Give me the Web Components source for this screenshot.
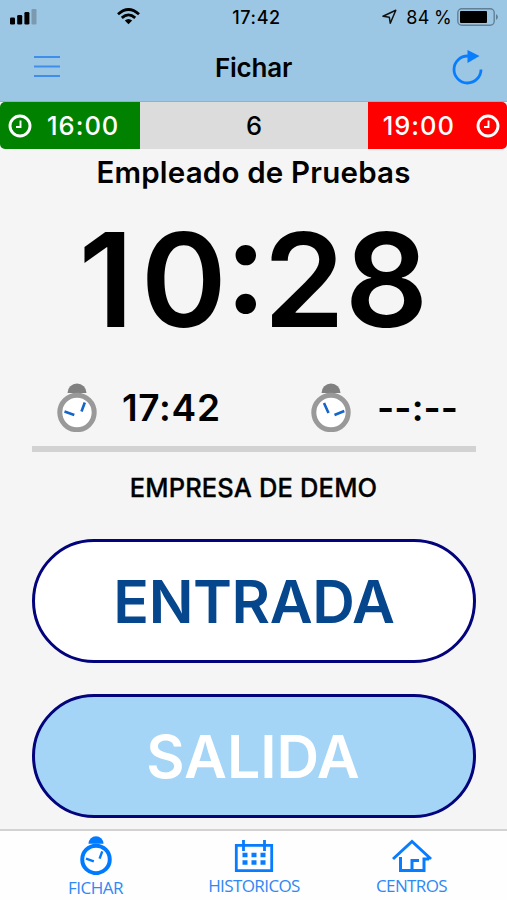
<!DOCTYPE html>
<html lang="es">
<head>
<meta charset="utf-8">
<title>Fichar</title>
<style>
body { margin: 0; background: #f5f5f5; font-family: Inter, "Liberation Sans", sans-serif; color: #000; }
</style>
</head>
<body>
<time-app></time-app>
<script>
function define(name, html) {
  const template = document.createElement('template');
  template.innerHTML = html;
  customElements.define(name, class extends HTMLElement {
    constructor() {
      super();
      this.attachShadow({ mode: 'open' }).appendChild(template.content.cloneNode(true));
    }
  });
}

define('status-bar', `
<style>
:host { display: grid; grid-template-columns: 1fr auto 1fr; height: 34px; align-items: center; font-size: 18px; font-weight: 500; }
.left { display: flex; align-items: center; padding-left: 10px; gap: 80px; }
.right { display: flex; align-items: center; justify-content: flex-end; padding-right: 8px; }
.time { letter-spacing: .6px; padding-left: 6px; }
.pct { margin: 0 5px 0 9px; font-weight: 400; letter-spacing: .3px; word-spacing: -1px; }
svg { display: block; }
</style>
<div class="left">
  <svg width="27" height="18" viewBox="0 0 27 18"><rect y="9.5" width="5" height="7" rx="1.3"/><rect x="7.2" y="7" width="5" height="9.5" rx="1.3"/><rect x="14.4" y="4" width="5" height="12.5" rx="1.3"/><rect x="21.5" y="1" width="5" height="15.5" rx="1.3" fill="#7b9ab0"/></svg>
  <svg width="23" height="18" viewBox="0 0 23 18" fill="none" stroke="#000" stroke-width="2.8"><path d="M1 6.200Q11.500-3.200 22 6.200M4.800 9.900Q11.500 3.800 18.200 9.900"/><path d="M7.800 12.500Q11.500 9.500 15.200 12.500L11.500 16.200Z" fill="#000" stroke="none"/></svg>
</div>
<span class="time">17:42</span>
<div class="right">
  <svg width="15" height="16" viewBox="0 0 15 16" fill="none" stroke="#111" stroke-width="1.5" stroke-linejoin="round"><path d="M1 7.300L13.800 1.200L8.300 14.300L7.300 8.200Z"/></svg>
  <span class="pct">84 %</span>
  <svg width="42" height="18" viewBox="0 0 42 18"><rect x=".8" y=".8" width="36.400" height="16.400" rx="4" fill="none" stroke="#628094" stroke-width="1.400"/><rect x="3" y="3" width="27" height="12" rx="1"/><path d="M39 6Q43 9 39 12Z" fill="#628094"/></svg>
</div>`);

define('nav-bar', `
<style>
:host { display: grid; grid-template-columns: 1fr auto 1fr; height: 67px; align-items: center; border-bottom: 1px solid #8fb2ca; }
.menu { padding-left: 33px; margin-top: -4px; }
.reload { justify-self: end; padding-right: 24px; margin-top: -2px; }
h1 { margin: 0; font-size: 26px; font-weight: 600; letter-spacing: -.2px; }
svg { display: block; }
</style>
<svg class="menu" width="27" height="24" viewBox="0 0 27 24" stroke="#3f8eea" stroke-width="2"><path d="M1 3H27M1 12.500H27M1 22H27"/></svg>
<h1><slot></slot></h1>
<svg class="reload" width="31" height="36" viewBox="0 0 31 36"><path d="M29 20.500A13.500 13.500 0 1 1 16 7" fill="none" stroke="#087efe" stroke-width="2.800"/><path d="M15.500 1L27.500 7L15.500 14Z" fill="#087efe"/></svg>`);

define('clock-glyph', `
<style>:host { display: block; width: 24px; height: 24px; } svg { display: block; }</style>
<svg width="24" height="24" viewBox="0 0 24 24" fill="none" stroke="#fff"><circle cx="12" cy="12" r="10" stroke-width="2.900"/><path d="M12.500 6.500V13H8" stroke-width="1.900"/></svg>`);

define('shift-bar', `
<style>
:host { display: grid; grid-template-columns: 140px 1fr 139px; height: 47px; font-size: 25.500px; font-weight: 500; border-radius: 5px; overflow: hidden; }
div { display: flex; align-items: center; }
.in { background: #008200; color: #fff; padding-left: 8px; gap: 15px; letter-spacing: 1px; }
.mid { background: #dcdcdc; justify-content: center; }
.out { background: #fe0000; color: #fff; padding-right: 7px; gap: 21px; justify-content: flex-end; letter-spacing: 1px; }
</style>
<div class="in"><clock-glyph></clock-glyph><slot name="in"></slot></div>
<div class="mid"><slot name="hours"></slot></div>
<div class="out"><slot name="out"></slot><clock-glyph></clock-glyph></div>`);

define('stop-watch', `
<style>
:host { display: block; width: 40px; height: 50px; --ring: #999; --cap: #808080; --hand: #1465c8; --face: #fff; }
svg { display: block; width: 100%; height: 100%; }
.b { display: none; }
:host([late]) .a { display: none; }
:host([late]) .b { display: block; }
</style>
<svg viewBox="0 0 40 50"><path d="M10.500 11A9.500 9.500 0 0 1 29.500 11Z" style="fill:var(--cap)"/><circle cx="20" cy="30.500" r="17.200" stroke-width="5" style="fill:var(--face);stroke:var(--ring)"/>
<g style="stroke:var(--hand);stroke-width:var(--hw,2.600)"><path class="a" d="M7.500 29.500L17.300 32.900M24.500 29.500L27.800 20.500"/><path class="b" d="M13 21L17.500 31M23.500 33L33.300 29"/></g></svg>`);

define('time-mark', `
<style>
:host { display: flex; align-items: center; font-size: 37px; font-weight: 600; height: 50px; }
::slotted(*) { display: block; }
</style><slot></slot>`);

define('punch-button', `
<style>
:host { display: block; }
button { display: flex; align-items: center; justify-content: center; width: 444px; height: 124px; box-sizing: border-box; padding: 0; border: 3px solid #03037c; border-radius: 62px; background: #fff; color: #05468c; font: 600 59px Inter, "Liberation Sans", sans-serif; letter-spacing: -.4px; }
:host([tone="blue"]) button { background: #a4d5f6; color: #fff; letter-spacing: 0; padding-right: 2px; }
</style><button><slot></slot></button>`);

define('tab-item', `
<style>
:host { display: flex; flex-direction: column; align-items: center; color: #3088f5; font: 17px/20px "Open Sans", "Noto Sans", sans-serif; }
::slotted(*) { display: block; }
</style><slot name="icon"></slot><span><slot></slot></span>`);

define('tab-bar', `
<style>
:host { display: grid; grid-template-columns: 191px 126px 189px; box-sizing: border-box; height: 71px; background: #fefefe; border-top: 2px solid #d2d2d2; }
stop-watch { width: 32px; height: 40px; margin: 4px 0 3px; --ring: #007aff; --cap: #007aff; --hand: #007aff; --hw: 3; --face: #fff; }
.f { letter-spacing: -.5px; }
.h { letter-spacing: -.6px; padding-top: 8px; }
.c { letter-spacing: -.6px; padding-top: 8px; }
svg { margin-bottom: 3px; }
</style>
<tab-item class="f"><stop-watch slot="icon"></stop-watch>FICHAR</tab-item>
<tab-item class="h"><svg slot="icon" width="40" height="34" viewBox="0 0 40 34" fill="none" stroke="#087cff" stroke-width="2.800"><path d="M2.300 6.300H37.700V31.700H2.300ZM9.500 1V12M30.500 1V12"/><path d="M8.500 16H31.500M8.500 23.500H31.500" stroke-width="4.500" stroke-dasharray="5 4"/></svg>HISTORICOS</tab-item>
<tab-item class="c"><svg slot="icon" width="40" height="34" viewBox="0 0 40 34" fill="none" stroke="#087cff" stroke-width="3"><path d="M1 20L20 2.500L39 20M8.500 18V31.500H32V20H37M20 31V21.500H27"/></svg>CENTROS</tab-item>`);

define('time-app', `
<style>
:host { display: flex; flex-direction: column; width: 507px; height: 900px; overflow: hidden; background: #f5f5f5; }
header { background: #9cc7e4; height: 102px; }
h2 { margin: 7px 0 0; text-align: center; font-size: 29.500px; line-height: 32px; font-weight: 600; letter-spacing: .2px; }
.big { display: flex; justify-content: center; font-size: 130.500px; line-height: 140px; font-weight: 600; margin-top: 22px; }
.one { letter-spacing: 7px; }
.zero { letter-spacing: -2px; }
.colon { font-feature-settings: "case"; letter-spacing: -3px; }
.marks { display: grid; grid-template-columns: 254px 253px; height: 50px; margin-top: 32px; }
.marks time-mark { padding-left: 57px; gap: 25px; }
.t1 { letter-spacing: .7px; }
.t2 { letter-spacing: .1px; padding-left: 1px; }
.rule { height: 6px; margin: 14px 31px 0 32px; background: #d2d2d2; }
.company { text-align: center; font-size: 25.500px; line-height: 30px; font-weight: 500; letter-spacing: .15px; margin-top: 21px; -webkit-text-stroke: .3px #000; }
main { flex: 1; }
punch-button { margin-left: 32px; }
.p1 { margin-top: 36px; } .p2 { margin-top: 31px; }
</style>
<header><status-bar></status-bar><nav-bar>Fichar</nav-bar></header>
<main>
<shift-bar><span slot="in">16:00</span><span slot="hours">6</span><span slot="out">19:00</span></shift-bar>
<h2><span>Empleado de Pruebas</span></h2>
<div class="big"><div><span class="one">1</span><span class="zero">0</span><span class="colon">:</span>28</div></div>
<div class="marks"><time-mark><stop-watch></stop-watch><span class="t1">17:42</span></time-mark><time-mark><stop-watch late></stop-watch><span class="t2">--:--</span></time-mark></div>
<div class="rule"></div>
<div class="company"><span>EMPRESA DE DEMO</span></div>
<punch-button class="p1">ENTRADA</punch-button>
<punch-button class="p2" tone="blue">SALIDA</punch-button>
</main>
<tab-bar></tab-bar>`);
</script>
</body>
</html>
